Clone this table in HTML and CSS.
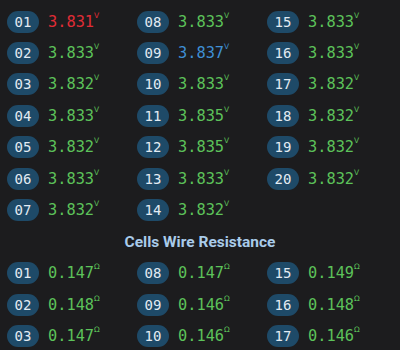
FILE: index.html
```html
<!DOCTYPE html>
<html>
<head>
<meta charset="utf-8">
<link rel="stylesheet" href="styles.css">
</head>
<body>
<div class="page">
  <div class="grid rows7">
    <div class="cell"><span class="badge">01</span><span class="val red">3.831<sup>V</sup></span></div>
    <div class="cell"><span class="badge">02</span><span class="val">3.833<sup>V</sup></span></div>
    <div class="cell"><span class="badge">03</span><span class="val">3.832<sup>V</sup></span></div>
    <div class="cell"><span class="badge">04</span><span class="val">3.833<sup>V</sup></span></div>
    <div class="cell"><span class="badge">05</span><span class="val">3.832<sup>V</sup></span></div>
    <div class="cell"><span class="badge">06</span><span class="val">3.833<sup>V</sup></span></div>
    <div class="cell"><span class="badge">07</span><span class="val">3.832<sup>V</sup></span></div>
    <div class="cell"><span class="badge">08</span><span class="val">3.833<sup>V</sup></span></div>
    <div class="cell"><span class="badge">09</span><span class="val blue">3.837<sup>V</sup></span></div>
    <div class="cell"><span class="badge">10</span><span class="val">3.833<sup>V</sup></span></div>
    <div class="cell"><span class="badge">11</span><span class="val">3.835<sup>V</sup></span></div>
    <div class="cell"><span class="badge">12</span><span class="val">3.835<sup>V</sup></span></div>
    <div class="cell"><span class="badge">13</span><span class="val">3.833<sup>V</sup></span></div>
    <div class="cell"><span class="badge">14</span><span class="val">3.832<sup>V</sup></span></div>
    <div class="cell"><span class="badge">15</span><span class="val">3.833<sup>V</sup></span></div>
    <div class="cell"><span class="badge">16</span><span class="val">3.833<sup>V</sup></span></div>
    <div class="cell"><span class="badge">17</span><span class="val">3.832<sup>V</sup></span></div>
    <div class="cell"><span class="badge">18</span><span class="val">3.832<sup>V</sup></span></div>
    <div class="cell"><span class="badge">19</span><span class="val">3.832<sup>V</sup></span></div>
    <div class="cell"><span class="badge">20</span><span class="val">3.832<sup>V</sup></span></div>
  </div>
  <div class="title">Cells Wire Resistance</div>
  <div class="grid rows3">
    <div class="cell"><span class="badge">01</span><span class="val">0.147<sup>Ω</sup></span></div>
    <div class="cell"><span class="badge">02</span><span class="val">0.148<sup>Ω</sup></span></div>
    <div class="cell"><span class="badge">03</span><span class="val">0.147<sup>Ω</sup></span></div>
    <div class="cell"><span class="badge">08</span><span class="val">0.147<sup>Ω</sup></span></div>
    <div class="cell"><span class="badge">09</span><span class="val">0.146<sup>Ω</sup></span></div>
    <div class="cell"><span class="badge">10</span><span class="val">0.146<sup>Ω</sup></span></div>
    <div class="cell"><span class="badge">15</span><span class="val">0.149<sup>Ω</sup></span></div>
    <div class="cell"><span class="badge">16</span><span class="val">0.148<sup>Ω</sup></span></div>
    <div class="cell"><span class="badge">17</span><span class="val">0.146<sup>Ω</sup></span></div>
  </div>
</div>
</body>
</html>
```
FILE: styles.css
```css
html, body {
  margin: 0;
  padding: 0;
  background: #1c1c1e;
  width: 400px;
  height: 350px;
  overflow: hidden;
}
.page {
  padding: 6px 0 0 7px;
}
.grid {
  display: grid;
  grid-template-columns: 130px 130px 130px;
  grid-auto-flow: column;
  grid-auto-rows: 31.4px;
}
.rows7 { grid-template-rows: repeat(7, 31.4px); }
.rows3 { grid-template-rows: repeat(3, 31.4px); }
.cell {
  display: flex;
  align-items: center;
  gap: 9px;
}
.badge {
  width: 32px;
  height: 22px;
  border-radius: 11px;
  background: #1e4a68;
  color: #e2ebf3;
  font-family: "DejaVu Sans Mono", monospace;
  font-size: 14px;
  line-height: 22px;
  text-align: center;
}
.val {
  font-family: "DejaVu Sans Mono", monospace;
  font-size: 15.3px;
  color: #5cc25a;
  line-height: 22px;
}
.val sup {
  font-family: "DejaVu Sans", sans-serif;
  font-size: 7.5px;
  vertical-align: top;
  line-height: 9px;
}
.val.red { color: #e02c36; }
.val.blue { color: #3f8fd4; }
.title {
  height: 32px;
  display: flex;
  align-items: center;
  justify-content: center;
  padding-right: 7px;
  font-family: Roboto, "Liberation Sans", sans-serif;
  font-weight: bold;
  font-size: 15.5px;
  color: #a9cbea;
}
```
